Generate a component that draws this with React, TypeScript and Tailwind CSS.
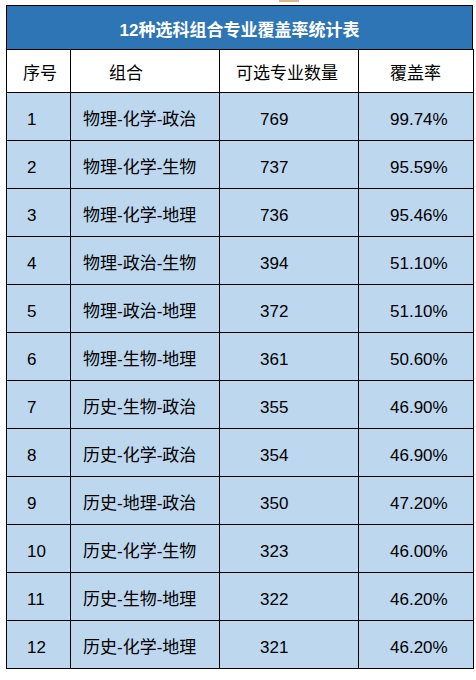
import React from "react";

const rows = [
  ["1", "物理-化学-政治", "769", "99.74%"],
  ["2", "物理-化学-生物", "737", "95.59%"],
  ["3", "物理-化学-地理", "736", "95.46%"],
  ["4", "物理-政治-生物", "394", "51.10%"],
  ["5", "物理-政治-地理", "372", "51.10%"],
  ["6", "物理-生物-地理", "361", "50.60%"],
  ["7", "历史-生物-政治", "355", "46.90%"],
  ["8", "历史-化学-政治", "354", "46.90%"],
  ["9", "历史-地理-政治", "350", "47.20%"],
  ["10", "历史-化学-生物", "323", "46.00%"],
  ["11", "历史-生物-地理", "322", "46.20%"],
  ["12", "历史-化学-地理", "321", "46.20%"],
];

const font = { fontFamily: '"Liberation Sans", "Noto Sans CJK SC", sans-serif' };

export default function App() {
  return (
    <div className="w-[476px] h-[680px] bg-white text-black" style={font}>
      <div className="ml-[279px] w-[20px] h-[2px] bg-[#d9b98a]" />
      <div className="ml-[6px] mt-[3px] w-[467px]">
        <div className="h-[44px] bg-[#2e75b6] border border-black border-b-0 flex items-center justify-center pt-[7px] text-white font-bold text-[17px]">
          12种选科组合专业覆盖率统计表
        </div>
        <table className="table-fixed border-collapse w-[467px] text-[17px]">
          <colgroup>
            <col className="w-[64px]" />
            <col className="w-[149px]" />
            <col className="w-[139px]" />
            <col className="w-[115px]" />
          </colgroup>
          <thead>
            <tr className="h-[43px] bg-white">
              <th className="border border-black font-normal text-left pl-[16px] pt-[5px]">序号</th>
              <th className="border border-black font-normal text-left pl-[38px] pt-[5px]">组合</th>
              <th className="border border-black font-normal text-left pl-[16px] pt-[5px]">可选专业数量</th>
              <th className="border border-black font-normal text-left pl-[31px] pt-[5px]">覆盖率</th>
            </tr>
          </thead>
          <tbody>
            {rows.map((r) => (
              <tr key={r[0]} className="h-[48px] bg-[#bdd7ee]">
                <td className="border border-black pl-[20px] pt-[6px]">{r[0]}</td>
                <td className="border border-black pl-[12px] pt-[6px]">{r[1]}</td>
                <td className="border border-black pl-[40px] pt-[6px]">{r[2]}</td>
                <td className="border border-black pl-[31px] pt-[6px]">{r[3]}</td>
              </tr>
            ))}
          </tbody>
        </table>
      </div>
    </div>
  );
}
